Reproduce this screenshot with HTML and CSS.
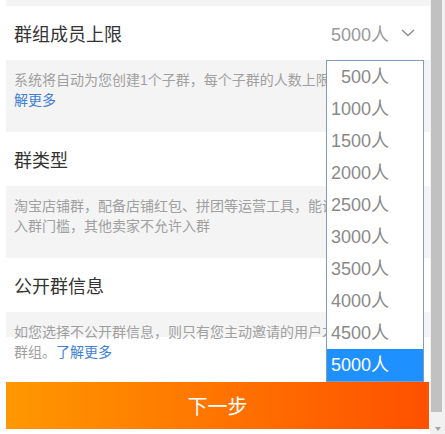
FILE: index.html
```html
<!DOCTYPE html>
<html lang="zh-CN">
<head>
<meta charset="utf-8">
<title>群设置</title>
<link rel="stylesheet" href="styles.css">
</head>
<body>
<div class="page">
  <main class="main">
    <div class="top-strip"></div>
    <div class="row">
      <span class="label">群组成员上限</span>
      <span class="value">5000人
        <svg class="chev" width="14" height="8" viewBox="0 0 14 8"><polyline points="1,1 7,6.5 13,1" fill="none" stroke="#8c8c8c" stroke-width="1.4"/></svg>
      </span>
    </div>
    <div class="desc">系统将自动为您创建1个子群，每个子群的人数上限为5000人，<a class="link">了</a><br><a class="link">解更多</a></div>
    <div class="row">
      <span class="label">群类型</span>
    </div>
    <div class="desc">淘宝店铺群，配备店铺红包、拼团等运营工具，能设置<br>入群门槛，其他卖家不允许入群</div>
    <div class="row">
      <span class="label">公开群信息</span>
    </div>
    <div class="desc desc-last">如您选择不公开群信息，则只有您主动邀请的用户才能加入<br>群组。<a class="link">了解更多</a></div>
    <button class="next">下一步</button>

    <ul class="dropdown">
      <li class="opt"><span>500人</span></li>
      <li class="opt"><span>1000人</span></li>
      <li class="opt"><span>1500人</span></li>
      <li class="opt"><span>2000人</span></li>
      <li class="opt"><span>2500人</span></li>
      <li class="opt"><span>3000人</span></li>
      <li class="opt"><span>3500人</span></li>
      <li class="opt"><span>4000人</span></li>
      <li class="opt"><span>4500人</span></li>
      <li class="opt selected"><span>5000人</span></li>
    </ul>
  </main>
  <div class="scrollbar">
    <div class="thumb"></div>
    <div class="arrow"></div>
  </div>
</div>
</body>
</html>
```
FILE: styles.css
```css
html, body {
  margin: 0;
  padding: 0;
  background: #fff;
}
body {
  font-family: "Liberation Sans", "Noto Sans CJK SC", sans-serif;
  width: 445px;
  height: 434px;
  overflow: hidden;
}
.page {
  display: flex;
  height: 434px;
}
.main {
  flex: 1;
  position: relative;
  padding-left: 6px;
  overflow: hidden;
  display: flex;
  flex-direction: column;
}
.top-strip {
  height: 6px;
  background: #f4f4f4;
}
.row {
  height: 54px;
  display: flex;
  align-items: center;
  justify-content: space-between;
  padding: 0 15px 0 8px;
  font-size: 18px;
  color: #333;
}
.value {
  display: flex;
  align-items: center;
  gap: 12px;
  color: #999;
  white-space: nowrap;
}
.chev {
  display: block;
}
.desc {
  height: 72px;
  box-sizing: border-box;
  background: #f4f4f4;
  padding: 10px 8px 0;
  font-size: 14px;
  line-height: 20px;
  color: #a0a0a0;
  white-space: nowrap;
  overflow: hidden;
}
.link {
  color: #3f7fd4;
}
.desc-last {
  height: 70px;
  background: linear-gradient(#f4f4f4 25px, #fff 25px);
}
.next {
  height: 47px;
  margin: 0 1px 0 0;
  border: 0;
  padding: 0;
  background: linear-gradient(to right, #ff9800, #ff5000);
  color: #fff;
  font-family: "Liberation Sans", "Noto Sans CJK SC", sans-serif;
  font-size: 20px;
  text-align: center;
}
.dropdown {
  position: absolute;
  left: 326px;
  top: 60px;
  width: 96px;
  margin: 0;
  padding: 0;
  list-style: none;
  background: #fff;
  border: 1px solid #7f9db9;
}
.opt {
  height: 32px;
  line-height: 32px;
  padding-left: 2px;
  font-size: 18px;
  color: #8a8a8a;
  white-space: nowrap;
}
.opt span {
  display: inline-block;
  width: 60px;
  text-align: right;
}
.opt.selected {
  background: #1e90ff;
  color: #fff;
}
.scrollbar {
  width: 15px;
  background: #f1f1f1;
  display: flex;
  flex-direction: column;
}
.thumb {
  height: 412px;
  margin: 0 3px 0 1px;
  background: #c1c1c1;
}
.arrow {
  margin: 15px auto 0;
  width: 0;
  height: 0;
  border-left: 3.5px solid transparent;
  border-right: 3.5px solid transparent;
  border-top: 4px solid #a3a3a3;
}
```
